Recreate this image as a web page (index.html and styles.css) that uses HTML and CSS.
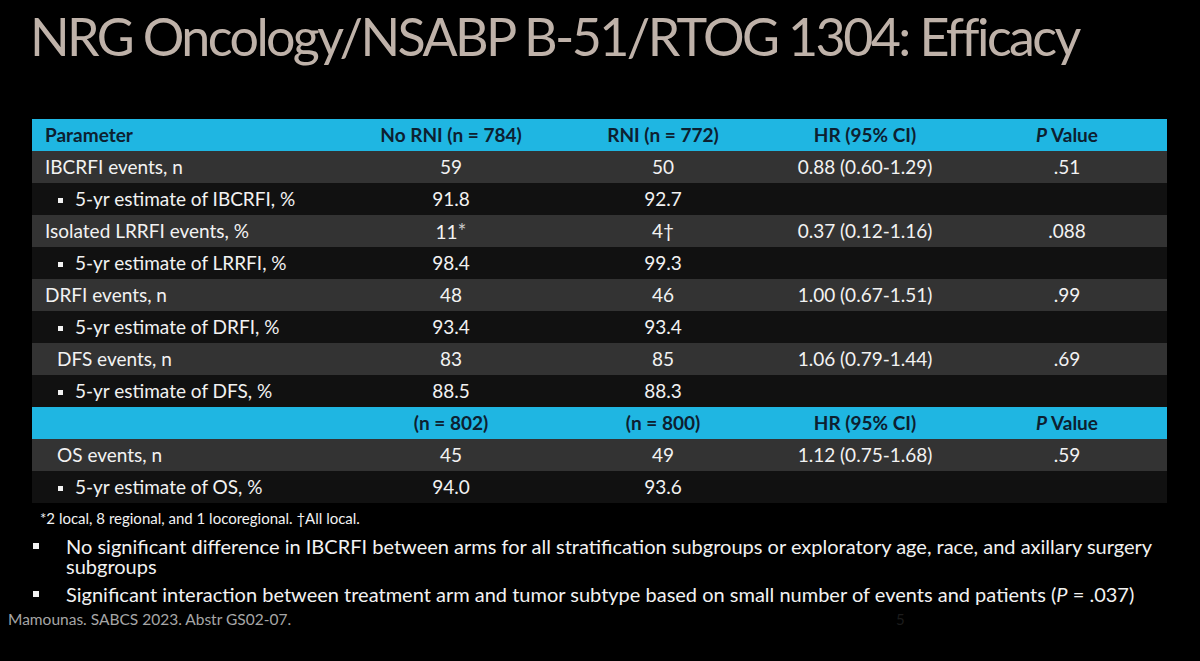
FILE: index.html
```html
<!DOCTYPE html>
<html lang="en">
<head>
<meta charset="utf-8">
<title>NRG Oncology/NSABP B-51/RTOG 1304: Efficacy</title>
<link rel="stylesheet" href="styles.css">
</head>
<body>
<div class="slide">
  <h1 class="title">NRG Oncology/NSABP B-51/RTOG 1304: Efficacy</h1>
  <table class="data">
    <colgroup>
      <col class="c1"><col class="c2"><col class="c3"><col class="c4"><col class="c5">
    </colgroup>
    <tr class="head">
      <th class="lbl">Parameter</th><th>No RNI (n = 784)</th><th>RNI (n = 772)</th><th>HR (95% CI)</th><th><i>P</i> Value</th>
    </tr>
    <tr class="odd"><td class="lbl">IBCRFI events, n</td><td>59</td><td>50</td><td>0.88 (0.60-1.29)</td><td>.51</td></tr>
    <tr class="even"><td class="lbl sub"><span class="sq"></span>5-yr estimate of IBCRFI, %</td><td>91.8</td><td>92.7</td><td></td><td></td></tr>
    <tr class="odd"><td class="lbl">Isolated LRRFI events, %</td><td>11<span class="mark">*</span></td><td>4†</td><td>0.37 (0.12-1.16)</td><td>.088</td></tr>
    <tr class="even"><td class="lbl sub"><span class="sq"></span>5-yr estimate of LRRFI, %</td><td>98.4</td><td>99.3</td><td></td><td></td></tr>
    <tr class="odd"><td class="lbl">DRFI events, n</td><td>48</td><td>46</td><td>1.00 (0.67-1.51)</td><td>.99</td></tr>
    <tr class="even"><td class="lbl sub"><span class="sq"></span>5-yr estimate of DRFI, %</td><td>93.4</td><td>93.4</td><td></td><td></td></tr>
    <tr class="odd"><td class="lbl ind">DFS events, n</td><td>83</td><td>85</td><td>1.06 (0.79-1.44)</td><td>.69</td></tr>
    <tr class="even"><td class="lbl sub"><span class="sq"></span>5-yr estimate of DFS, %</td><td>88.5</td><td>88.3</td><td></td><td></td></tr>
    <tr class="head">
      <th class="lbl"></th><th>(n = 802)</th><th>(n = 800)</th><th>HR (95% CI)</th><th><i>P</i> Value</th>
    </tr>
    <tr class="odd"><td class="lbl ind">OS events, n</td><td>45</td><td>49</td><td>1.12 (0.75-1.68)</td><td>.59</td></tr>
    <tr class="even"><td class="lbl sub"><span class="sq"></span>5-yr estimate of OS, %</td><td>94.0</td><td>93.6</td><td></td><td></td></tr>
  </table>
  <p class="foot">*2 local, 8 regional, and 1 locoregional. †All local.</p>
  <ul class="bullets">
    <li>No significant difference in IBCRFI between arms for all stratification subgroups or exploratory age, race, and axillary surgery subgroups</li>
    <li>Significant interaction between treatment arm and tumor subtype based on small number of events and patients (<i>P</i>&nbsp;= .037)</li>
  </ul>
  <div class="bottom">
    <span class="source">Mamounas. SABCS 2023. Abstr GS02-07.</span>
    <span class="pagenum">5</span>
  </div>
</div>
</body>
</html>
```

FILE: styles.css
```css
html, body {
  margin: 0;
  padding: 0;
  background: #000;
}

.slide {
  width: 1200px;
  height: 661px;
  background: #000;
  font-family: "Lato", "Open Sans", sans-serif;
  color: #f2f2f2;
  overflow: hidden;
  display: flex;
  flex-direction: column;
}

.title {
  margin: 0;
  padding: 1px 0 0 30px;
  height: 119px;
  box-sizing: border-box;
  font-size: 52px;
  font-weight: 400;
  line-height: 70px;
  color: #bfb2a9;
  letter-spacing: -2.6px;
  white-space: nowrap;
}

.data {
  margin-left: 32px;
  width: 1135px;
  border-collapse: collapse;
  table-layout: fixed;
  font-size: 19px;
}

.c1 { width: 307px; }
.c2 { width: 224px; }
.c3 { width: 200px; }
.c4 { width: 204px; }
.c5 { width: 200px; }

.data tr { height: 32px; }

.data th, .data td {
  padding: 0;
  text-align: center;
  vertical-align: middle;
  white-space: nowrap;
  line-height: 22px;
}

.head {
  background: #1fb6e2;
  color: #0d2030;
}

.head th {
  font-weight: 700;
}

.odd { background: #333333; }
.even { background: #111111; }

.data .lbl {
  text-align: left;
  padding-left: 13px;
}

.data .ind {
  padding-left: 25px;
}

.data .sub {
  padding-left: 26px;
}

.sq {
  display: inline-block;
  width: 5px;
  height: 5px;
  background: #f2f2f2;
  margin-right: 12px;
  vertical-align: middle;
  position: relative;
  top: -1px;
}

.mark {
  font-size: 21px;
  vertical-align: 0;
  color: #c8c8c8;
}

.foot {
  margin: 6px 0 0 40px;
  font-size: 15px;
  line-height: 18px;
  color: #f2f2f2;
}

.bullets {
  list-style: none;
  margin: 9px 0 0 0;
  padding: 0 30px 0 66px;
  font-size: 20px;
  line-height: 20px;
}

.bullets li {
  position: relative;
  margin-bottom: 8px;
}

.bullets li:last-child {
  margin-bottom: 6px;
}

.bullets li::before {
  content: "";
  position: absolute;
  left: -33px;
  top: 7px;
  width: 6px;
  height: 6px;
  background: #f2f2f2;
}

.bottom {
  display: flex;
  align-items: baseline;
  padding: 0 0 0 8px;
}

.source {
  font-size: 15.5px;
  color: #a6a6a6;
}

.pagenum {
  margin-left: 605px;
  font-size: 15px;
  color: #1c1c1c;
}
```
